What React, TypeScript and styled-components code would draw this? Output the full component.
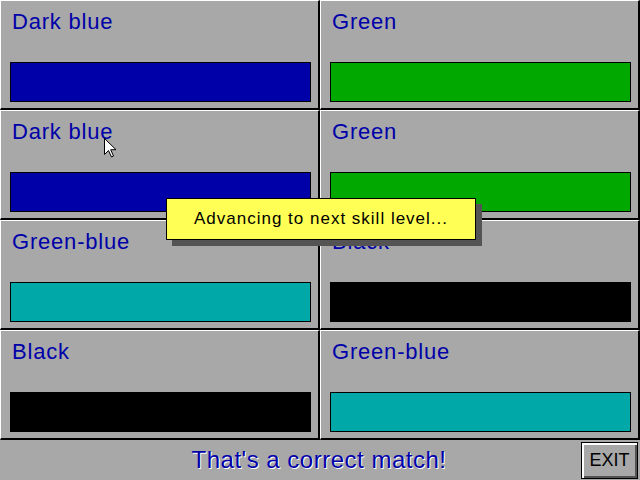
import React from 'react';
import styled, { createGlobalStyle } from 'styled-components';

const GlobalStyle = createGlobalStyle`
  html, body {
    margin: 0;
    padding: 0;
    background: #a8a8a8;
  }
  * {
    box-sizing: border-box;
  }
`;

type Tile = { label: string; color: string };

const tiles: Tile[] = [
  { label: 'Dark blue', color: '#0000a8' },
  { label: 'Green', color: '#00a800' },
  { label: 'Dark blue', color: '#0000a8' },
  { label: 'Green', color: '#00a800' },
  { label: 'Green-blue', color: '#00a8a8' },
  { label: 'Black', color: '#000000' },
  { label: 'Black', color: '#000000' },
  { label: 'Green-blue', color: '#00a8a8' },
];

export default function App() {
  return (
    <>
      <GlobalStyle />
      <Screen>
        <Board>
          {tiles.map((t, i) => (
            <Card key={i}>
              <Label>{t.label}</Label>
              <Swatch $color={t.color} />
            </Card>
          ))}
        </Board>
        <StatusBar>
          <Message>That's a correct match!</Message>
          <ExitButton>EXIT</ExitButton>
        </StatusBar>

        {/* popup over the board */}
        <Notice>Advancing to next skill level...</Notice>

        <Cursor width="13" height="20" viewBox="0 0 13 20">
          <path
            d="M0.5 0.5 L0.5 16.5 L4.5 12.5 L7.5 19 L9.5 18 L6.7 11.7 L12 11.7 Z"
            fill="#fff"
            stroke="#000"
            strokeWidth="1"
            strokeLinejoin="miter"
          />
        </Cursor>
      </Screen>
    </>
  );
}

const Screen = styled.div`
  position: relative;
  width: 640px;
  height: 480px;
  background: #a8a8a8;
  display: flex;
  flex-direction: column;
  overflow: hidden;
  font-family: 'Liberation Sans', Arial, sans-serif;
`;

const Board = styled.div`
  display: grid;
  grid-template-columns: repeat(2, 320px);
  grid-template-rows: repeat(4, 110px);
`;

const Card = styled.div`
  display: flex;
  flex-direction: column;
  background: #a8a8a8;
  border-top: 1px solid #fff;
  border-left: 1px solid #fff;
  border-right: 2px solid #000;
  border-bottom: 2px solid #000;
  padding: 10px 7px 0 9px;
`;

const Label = styled.div`
  color: #0000a8;
  font-size: 22px;
  line-height: 22px;
  letter-spacing: 0.8px;
  padding-left: 2px;
  white-space: nowrap;
`;

const Swatch = styled.div<{ $color: string }>`
  margin-top: 29px;
  height: 40px;
  background: ${(p) => p.$color};
  border: 1px solid #000;
`;

const StatusBar = styled.div`
  flex: 1;
  display: grid;
  grid-template-columns: 1fr auto 1fr;
  align-items: center;
  padding: 0 2px 0 0;
`;

const Message = styled.div`
  grid-column: 2;
  color: #0000a8;
  font-size: 24px;
  letter-spacing: 0.5px;
  text-shadow: 1px 1px 0 #fff;
  white-space: nowrap;
`;

const ExitButton = styled.div`
  grid-column: 3;
  justify-self: end;
  width: 57px;
  height: 37px;
  display: flex;
  align-items: center;
  justify-content: center;
  border: 1px solid #000;
  box-shadow: inset 2px 2px 0 #fff, inset -2px -2px 0 #545454;
  background: #a8a8a8;
  color: #000;
  font-size: 18px;
`;

const Notice = styled.div`
  position: absolute;
  left: 166px;
  top: 198px;
  width: 310px;
  height: 42px;
  display: flex;
  align-items: center;
  justify-content: center;
  background: #ffff55;
  border: 1px solid #000;
  box-shadow: 6px 6px 0 #545454;
  color: #000;
  font-size: 17px;
  letter-spacing: 1px;
  white-space: nowrap;
`;

const Cursor = styled.svg`
  position: absolute;
  left: 104px;
  top: 138px;
`;
